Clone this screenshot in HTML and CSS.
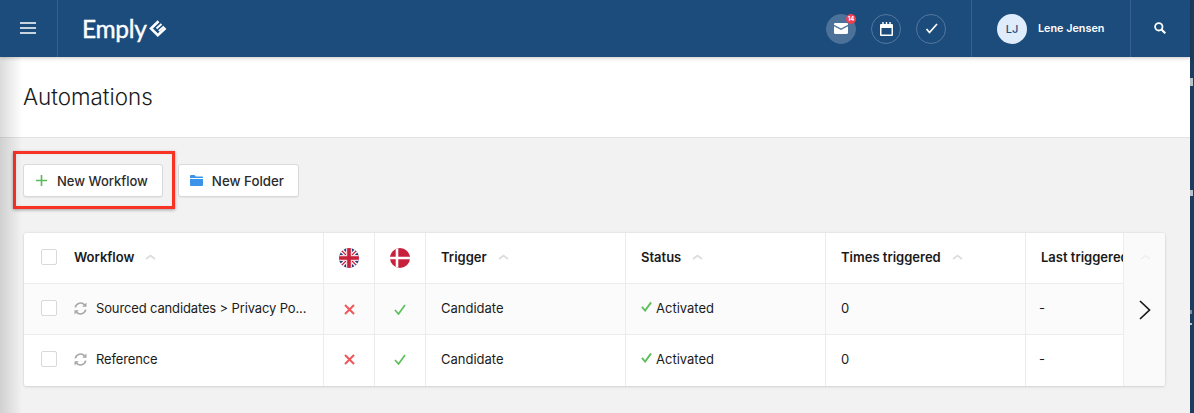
FILE: index.html
```html
<!DOCTYPE html>
<html lang="en">
<head>
<meta charset="utf-8">
<title>Automations</title>
<link rel="stylesheet" href="styles.css">
</head>
<body>
<div class="app">
  <div class="main">
    <header class="topbar">
      <button class="menu" aria-label="Menu">
        <svg width="16" height="12" viewBox="0 0 16 12"><path d="M0 1h16M0 6h16M0 11h16" stroke="#fff" stroke-width="1.600"/></svg>
      </button>
      <div class="brand">
        <span class="brand-name">Emply</span>
        <svg class="brand-mark" width="18" height="17" viewBox="0 0 18 17"><path d="M9.500 1.200 2 8.500 8.800 15.200 16.500 8" fill="none" stroke="#fff" stroke-width="2.600"/><path d="M7.500 8.500 12.500 4M9.800 11 15 6.500" stroke="#fff" stroke-width="2"/></svg>
      </div>
      <div class="quick">
        <span class="round active">
          <svg width="14" height="11" viewBox="0 0 14 11"><path d="M1.200 0h11.600c.7 0 1.200.5 1.200 1.200v.6L7 5.600 0 1.800v-.6C0 .5.500 0 1.200 0zM0 3.300l7 3.800 7-3.800v6.500c0 .7-.5 1.200-1.200 1.200H1.200C.5 11 0 10.500 0 9.800z" fill="#fff"/></svg>
          <span class="badge">14</span>
        </span>
        <span class="round">
          <svg width="13" height="14" viewBox="0 0 13 14"><path d="M1 2h11a1 1 0 0 1 1 1v10a1 1 0 0 1-1 1H1a1 1 0 0 1-1-1V3a1 1 0 0 1 1-1zm.5 4v6.500h10V6z" fill="#fff" fill-rule="evenodd"/><path d="M3 0v3M6.500 0v3M10 0v3" stroke="#fff" stroke-width="1.400"/></svg>
        </span>
        <span class="round">
          <svg width="13" height="11" viewBox="0 0 13 11"><path d="M1.500 6l3 3.500L12 1" fill="none" stroke="#fff" stroke-width="1.700"/></svg>
        </span>
      </div>
      <div class="user">
        <span class="avatar">LJ</span>
        <span class="user-name">Lene Jensen</span>
      </div>
      <div class="search">
        <svg width="12" height="12" viewBox="0 0 12 12"><circle cx="4.800" cy="4.800" r="3.700" fill="none" stroke="#fff" stroke-width="1.800"/><path d="M7.500 7.500 11.300 11.300" stroke="#fff" stroke-width="2.200"/></svg>
      </div>
    </header>

    <section class="title-bar">
      <h1>Automations</h1>
    </section>

    <section class="content">
      <div class="actions">
        <div class="highlight">
          <button class="btn">
            <svg width="11" height="11" viewBox="0 0 11 11"><path d="M5.500 0v11M0 5.500h11" stroke="#5cb85c" stroke-width="1.600"/></svg>
            New Workflow
          </button>
        </div>
        <button class="btn btn-folder">
          <svg width="13" height="11" viewBox="0 0 13 11"><path d="M1 0h3.500l1.300 1.500H12a1 1 0 0 1 1 1V3H0V1a1 1 0 0 1 1-1zM0 4h13v6a1 1 0 0 1-1 1H1a1 1 0 0 1-1-1z" fill="#3b93ea"/></svg>
          New Folder
        </button>
      </div>

      <div class="card">
        <div class="table">
          <div class="row head">
            <div class="cell c-name">
              <span class="check"></span>
              <span class="th">Workflow</span>
              <svg class="sort" width="11" height="6" viewBox="0 0 11 6"><path d="M1 5l4.500-3.500L10 5" fill="none" stroke="#dcdcdc" stroke-width="1.600"/></svg>
            </div>
            <div class="cell c-flag">
              <svg width="20" height="20" viewBox="0 0 20 20"><defs><clipPath id="r1"><circle cx="10" cy="10" r="10"/></clipPath></defs><g clip-path="url(#r1)"><rect width="20" height="20" fill="#27397a"/><path d="M0 0l20 20M20 0 0 20" stroke="#fff" stroke-width="4"/><path d="M0 0l20 20M20 0 0 20" stroke="#c8213c" stroke-width="1.300"/><path d="M10 0v20M0 10h20" stroke="#f3d9dd" stroke-width="6"/><path d="M10 0v20M0 10h20" stroke="#c8213c" stroke-width="3.600"/></g></svg>
            </div>
            <div class="cell c-flag">
              <svg width="20" height="20" viewBox="0 0 20 20"><defs><clipPath id="r2"><circle cx="10" cy="10" r="10"/></clipPath></defs><g clip-path="url(#r2)"><rect width="20" height="20" fill="#c8213c"/><path d="M7 0v20M0 10h20" stroke="#fff" stroke-width="2.600"/></g></svg>
            </div>
            <div class="cell c-wide"><span class="th">Trigger</span><svg class="sort" width="11" height="6" viewBox="0 0 11 6"><path d="M1 5l4.500-3.500L10 5" fill="none" stroke="#dcdcdc" stroke-width="1.600"/></svg></div>
            <div class="cell c-wide"><span class="th">Status</span><svg class="sort" width="11" height="6" viewBox="0 0 11 6"><path d="M1 5l4.500-3.500L10 5" fill="none" stroke="#dcdcdc" stroke-width="1.600"/></svg></div>
            <div class="cell c-wide"><span class="th">Times triggered</span><svg class="sort" width="11" height="6" viewBox="0 0 11 6"><path d="M1 5l4.500-3.500L10 5" fill="none" stroke="#dcdcdc" stroke-width="1.600"/></svg></div>
            <div class="cell c-last"><span class="th">Last triggered</span></div>
          </div>

          <div class="row alt">
            <div class="cell c-name">
              <span class="check"></span>
              <svg class="sync" width="13" height="13" viewBox="0 0 13 13"><path d="M1.300 5.300A5.300 5.300 0 0 1 10.600 3M11.700 7.700A5.300 5.300 0 0 1 2.400 10" fill="none" stroke="#a8a8a8" stroke-width="1.700"/><path d="M12.500 .5v4.300H8.200zM.5 12.500V8.200h4.300z" fill="#a8a8a8"/></svg>
              <span class="name">Sourced candidates &gt; Privacy Po...</span>
            </div>
            <div class="cell c-flag"><svg width="11" height="11" viewBox="0 0 11 11"><path d="M1 1l9 9M10 1l-9 9" stroke="#f0565a" stroke-width="2"/></svg></div>
            <div class="cell c-flag"><svg width="12" height="11" viewBox="0 0 12 11"><path d="M1 6l3.500 4L11 1" fill="none" stroke="#5cbf5c" stroke-width="1.700"/></svg></div>
            <div class="cell c-wide">Candidate</div>
            <div class="cell c-wide"><svg class="ok" width="11" height="11" viewBox="0 0 12 11"><path d="M1 6l3.500 4L11 1" fill="none" stroke="#5cbf5c" stroke-width="2"/></svg>Activated</div>
            <div class="cell c-wide">0</div>
            <div class="cell c-last"><span class="dash">-</span></div>
          </div>

          <div class="row">
            <div class="cell c-name">
              <span class="check"></span>
              <svg class="sync" width="13" height="13" viewBox="0 0 13 13"><path d="M1.300 5.300A5.300 5.300 0 0 1 10.600 3M11.700 7.700A5.300 5.300 0 0 1 2.400 10" fill="none" stroke="#a8a8a8" stroke-width="1.700"/><path d="M12.500 .5v4.300H8.200zM.5 12.500V8.200h4.300z" fill="#a8a8a8"/></svg>
              <span class="name">Reference</span>
            </div>
            <div class="cell c-flag"><svg width="11" height="11" viewBox="0 0 11 11"><path d="M1 1l9 9M10 1l-9 9" stroke="#f0565a" stroke-width="2"/></svg></div>
            <div class="cell c-flag"><svg width="12" height="11" viewBox="0 0 12 11"><path d="M1 6l3.500 4L11 1" fill="none" stroke="#5cbf5c" stroke-width="1.700"/></svg></div>
            <div class="cell c-wide">Candidate</div>
            <div class="cell c-wide"><svg class="ok" width="11" height="11" viewBox="0 0 12 11"><path d="M1 6l3.500 4L11 1" fill="none" stroke="#5cbf5c" stroke-width="2"/></svg>Activated</div>
            <div class="cell c-wide">0</div>
            <div class="cell c-last"><span class="dash">-</span></div>
          </div>
        </div>
        <div class="more">
          <svg class="more-sort" width="11" height="6" viewBox="0 0 11 6"><path d="M1 5l4.500-3.500L10 5" fill="none" stroke="#f0f0f0" stroke-width="1.600"/></svg>
          <svg width="12" height="20" viewBox="0 0 12 20"><path d="M1 1l9.500 9L1 19" fill="none" stroke="#1a1a1a" stroke-width="1.700"/></svg>
        </div>
      </div>
    </section>
    <div class="edge-shade"></div>
  </div>
  <div class="edge">
    <span class="edge-mark m1"></span>
    <span class="edge-mark m2"></span>
    <span class="edge-mark m3"></span>
    <span class="edge-mark m4"></span>
  </div>
</div>
</body>
</html>
```
FILE: styles.css
```css
* { box-sizing: border-box; }
html, body { margin: 0; height: 100%; overflow: hidden; }
body { font-family: "Inter", "Liberation Sans", sans-serif; font-size: 13px; color: #1b1b1b; background: #f2f2f2; }
svg { display: block; flex: none; }

.app { display: flex; height: 413px; }
.main { flex: 1; min-width: 0; position: relative; display: flex; flex-direction: column; background: #f2f2f2; }
.edge { width: 4px; background: #1c3c5e; display: flex; flex-direction: column; }
.edge-mark { display: block; width: 3px; background: #b9c2cc; }
.m1 { height: 8px; margin-top: 78px; }
.m2 { height: 6px; margin-top: 104px; }
.m3 { height: 4px; margin-top: 114px; width: 2px; background: #7f8d9c; }
.m4 { height: 2px; margin-top: 9px; width: 2px; }
.edge-shade { position: absolute; left: 0; top: 0; bottom: 0; width: 22px; pointer-events: none; background: linear-gradient(to right, rgba(0,0,0,.14), rgba(0,0,0,0)); }

.topbar { height: 57px; flex: none; display: flex; align-items: stretch; background: #1c4c7c; color: #fff; box-shadow: 0 1px 4px rgba(0,0,0,.22); position: relative; z-index: 1; }
.menu { width: 58px; border: 0; padding: 0 2px 1px 0; background: none; border-right: 1px solid #34618e; display: flex; align-items: center; justify-content: center; }
.brand { margin-left: 24px; display: flex; align-items: center; gap: 2px; }
.brand-name { font-family: "Lato", sans-serif; font-size: 24.500px; font-weight: 400; letter-spacing: -.3px; -webkit-text-stroke: .4px #fff; }
.quick { margin-left: auto; display: flex; align-items: center; gap: 15px; width: 146px; border-right: 1px solid #34618e; flex: none; }
.round { width: 30px; height: 30px; border-radius: 50%; border: 1px solid #54789e; display: flex; align-items: center; justify-content: center; position: relative; }
.round.active { background: #4d7299; border-color: #4d7299; }
.badge { position: absolute; top: -1px; right: -1px; width: 10px; height: 10px; border-radius: 50%; background: #ec4050; font-size: 6px; line-height: 10px; text-align: center; font-weight: 700; color: #fff; }
.user { width: 159px; border-right: 1px solid #34618e; display: flex; align-items: center; gap: 11px; padding-left: 25px; }
.avatar { width: 30px; height: 30px; border-radius: 50%; background: #dfecfb; color: #1c4c7c; font-size: 11px; font-weight: 500; display: flex; align-items: center; justify-content: center; }
.user-name { font-size: 10.800px; font-weight: 600; white-space: nowrap; }
.search { width: 59px; display: flex; align-items: center; justify-content: center; padding: 0 2px 1px 0; }

.title-bar { height: 81px; flex: none; background: #fff; border-bottom: 1px solid #e2e2e2; padding: 26px 0 0 23px; }
h1 { margin: 0; font-size: 22.400px; font-weight: 300; line-height: 27px; color: #1a1a1a; }

.content { flex: 1; padding: 26px 25px 0 24px; }
.actions { display: flex; align-items: center; gap: 15px; height: 33px; margin-left: -1px; }
.highlight { position: relative; }
.highlight::after { content: ""; position: absolute; left: -10px; top: -13px; right: -12px; bottom: -12px; border: 3px solid #f93324; box-shadow: 0 1px 3px rgba(0,0,0,.35), inset 0 0 2px rgba(0,0,0,.1); pointer-events: none; }
.btn { height: 33px; padding: 0 14px 0 12px; display: flex; align-items: center; gap: 10px; background: #fff; border: 1px solid #d9d9d9; border-radius: 3px; font: 500 13px "Inter", "Liberation Sans", sans-serif; color: #2b2b2b; box-shadow: 0 1px 1px rgba(0,0,0,.06); white-space: nowrap; }
.btn-folder { padding: 0 14px 0 11px; font-size: 13.300px; gap: 9px; }

.card { margin-top: 36px; display: flex; height: 153px; background: #fff; border-radius: 2px; box-shadow: 0 0 2px rgba(0,0,0,.12), 0 1px 3px rgba(0,0,0,.1); overflow: hidden; }
.table { flex: 1; min-width: 0; overflow: hidden; }
.row { display: flex; height: 51px; border-bottom: 1px solid #ececec; width: max-content; }
.row:last-child { border-bottom: 0; }
.row.alt { background: #fbfbfb; }
.cell { display: flex; align-items: center; border-right: 1px solid #ececec; padding: 0 0 2px 15px; white-space: nowrap; overflow: hidden; font-size: 13px; }
.row:last-child .cell { padding-bottom: 3px; }
.cell.c-name { width: 300px; padding-left: 17px; }
.cell.c-flag { width: 51px; padding: 0; justify-content: center; }
.c-wide { width: 200px; }
.c-last { width: 98px; border-right: 0; }
.check { width: 16px; height: 16px; border: 1px solid #d9d9d9; border-radius: 2px; background: #fff; margin-right: 17px; flex: none; }
.th { font-weight: 600; color: #1a1a1a; }
.sort { margin-left: 11px; }
.sync { margin-right: 9px; }
.name { letter-spacing: -.14px; }
.ok { margin-right: 4px; margin-top: -3px; }
.dash { margin-left: -2px; }
.more { width: 42px; flex: none; background: #fafafa; border-left: 1px solid #ececec; display: flex; align-items: center; justify-content: center; position: relative; }
.more-sort { position: absolute; left: 16px; top: 21px; }
```
